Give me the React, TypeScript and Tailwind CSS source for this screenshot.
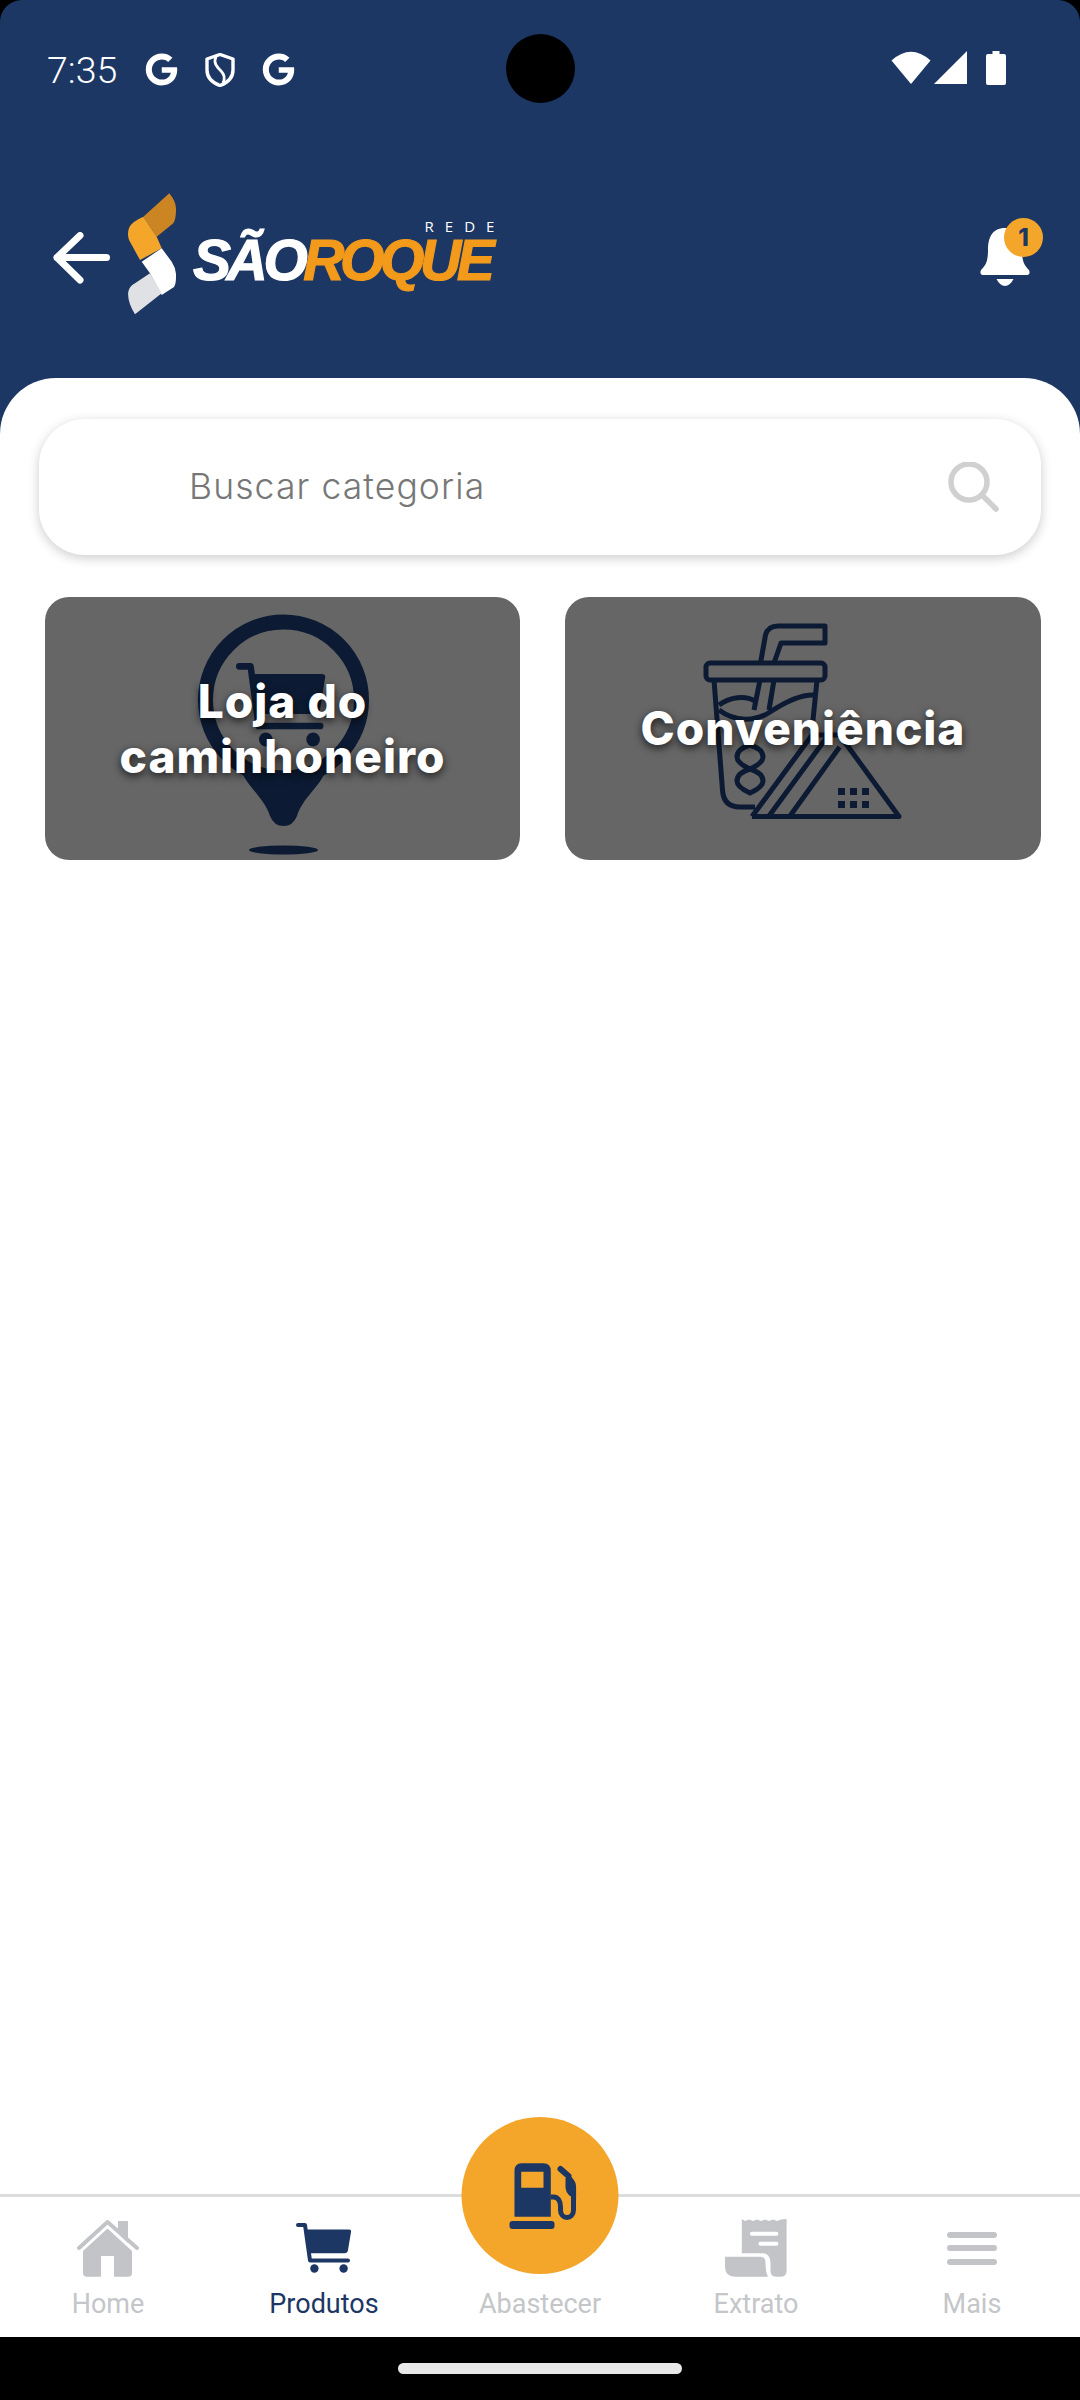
import { FaGoogle } from "react-icons/fa";

const NAVY = "#1c3764";

// Shopping cart used in the tab bar and inside the map pin
const CartShape = ({ color }: { color: string }) => (
  <>
    <path d="M2 2 H9 L14 37.5 H52" fill="none" stroke={color} strokeWidth="4" strokeLinecap="round" strokeLinejoin="round" />
    <path d="M10.5 6.5 H53 Q55.6 6.5 55 9 L52 27 Q51.5 30.3 48.5 30.3 H14 Z" fill={color} />
    <circle cx="18.4" cy="45.5" r="4.2" fill={color} />
    <circle cx="47.6" cy="45.5" r="4.2" fill={color} />
  </>
);

const StatusBar = () => (
  <div className="flex h-[120px] items-start pl-[47px] pr-[74px] pt-[51px] text-white">
    <span className="font-['Roboto'] text-[37.5px] font-light leading-[36px] w-[98px] mt-[1px]">7:35</span>
    <FaGoogle className="mt-[2px] w-[33px] h-[33px]" />
    <svg viewBox="0 0 30 34" className="ml-[27px] mt-[2px] w-[30px] h-[34px]" fill="none" stroke="white">
      <path d="M15 1.5 L28 6 V17 C28 25 22 30 15 32.5 C8 30 2 25 2 17 V6 Z" strokeWidth="3.4" strokeLinejoin="round" />
      <path d="M11 3.5 C8 10 12 14 16 18 C20 22 20 26 18 30" strokeWidth="2.8" />
    </svg>
    <FaGoogle className="ml-[27px] mt-[2px] w-[33px] h-[33px]" />
    <div className="flex-1" />
    <svg viewBox="0 0 40 33" className="w-[40px] h-[33px]" fill="white">
      <path d="M0.5 9.5 Q20 -8 39.5 9.5 L20 33 Z" />
    </svg>
    <svg viewBox="0 0 33 33" className="ml-[3px] w-[33px] h-[33px]" fill="white">
      <path d="M0 33 L33 0 V33 Z" />
    </svg>
    <svg viewBox="0 0 20 34" className="ml-[19px] w-[20px] h-[34px]" fill="white">
      <path d="M6.5 0 H13.5 V3 H18 Q20 3 20 5 V32 Q20 34 18 34 H2 Q0 34 0 32 V5 Q0 3 2 3 H6.5 Z" />
    </svg>
  </div>
);

const Logo = () => (
  <div className="flex items-start ml-[18px]">
    <svg viewBox="0 0 48 122" className="w-[48px] h-[122px] shrink-0">
      <path d="M41.3 0.3 Q48.5 9 48 17 Q48 26 45.3 30.3 L28.7 43.7 L15.3 23.7 Z" fill="#cb8523" />
      <path d="M15.3 23.7 Q3 29 1 35 Q-1 41 1 47 L12 67 L33.7 55.3 L28.7 43.7 Z" fill="#f4a62a" />
      <path d="M13.7 68.7 L33.7 55.3 L43.7 68.7 Q48.5 76 48 84 Q48 91 46 94 L33.7 102 L22 80.3 Z" fill="#ffffff" />
      <path d="M22 80.3 L33.7 100.3 L7 121.3 Q-1 108 0.3 98.7 Q1.5 93 7 90.3 Z" fill="#e0e1e4" />
    </svg>
    <div className="relative ml-[17px] mt-[43px] font-['Liberation_Sans'] text-[57px] font-bold italic leading-[48px] tracking-[-4.4px] whitespace-nowrap [-webkit-text-stroke:1.2px_currentColor]">
      <span className="text-white">SÃO</span>
      <span className="text-[#f39a1b]">ROQUE</span>
      <span className="absolute right-[-15px] top-[-18px] font-['Open_Sans'] text-[15px] font-normal not-italic leading-[16px] tracking-[11px] text-white [-webkit-text-stroke:0]">
        REDE
      </span>
    </div>
  </div>
);

const Header = () => (
  <div className="flex h-[258px] items-start pt-[73px] pl-[53px] pr-[37px]">
    <svg viewBox="0 0 57 52" className="mt-[39px] w-[57px] h-[52px] shrink-0" fill="none" stroke="white" strokeWidth="7" strokeLinecap="round" strokeLinejoin="round">
      <path d="M4 25.5 H53.5 M27 3.5 L4 25.5 L27 48" />
    </svg>
    <Logo />
    <div className="flex-1" />
    <div className="relative mt-[35px] w-[50px] h-[58px] mr-[13px]">
      <svg viewBox="0 0 50 58" className="w-[50px] h-[58px]" fill="white">
        <path d="M25 0 C12 0 8 10 8 22 C8 33 6 37 1 42 Q-1 47 4 47 H46 Q51 47 49 42 C44 37 42 33 42 22 C42 10 38 0 25 0 Z" />
        <path d="M16.5 51 H33.5 Q30 58 25 58 Q20 58 16.5 51 Z" />
      </svg>
      <span className="absolute left-[24px] top-[-10px] flex w-[39px] h-[39px] items-center justify-center rounded-full bg-[#f4a62a] font-['Inter'] text-[24px] font-extrabold text-[#1c3764]">
        1
      </span>
    </div>
  </div>
);

const SearchBox = () => (
  <div className="mx-[39px] flex h-[136px] items-center rounded-[46px] bg-white pl-[150px] pr-[42px] shadow-[0_3px_12px_rgba(0,0,0,0.2)]">
    <span className="flex-1 font-['Inter'] text-[35.5px] font-light tracking-[1.1px] text-[#777777]">Buscar categoria</span>
    <svg viewBox="0 0 51 50" className="w-[51px] h-[50px]" fill="none" stroke="#d0d0d0" strokeWidth="5.5" strokeLinecap="round">
      <circle cx="21" cy="20" r="18" />
      <path d="M34 33 L48 47" />
    </svg>
  </div>
);

const PinIcon = () => (
  <svg viewBox="0 0 475 263" className="absolute inset-0 w-full h-full">
    <circle cx="238.5" cy="103" r="78" fill="none" stroke="#0c1b33" strokeWidth="15" />
    <path d="M190 158 Q238 190 287 158 L281 173 C275 190 258 200 252 219 Q248 229 238.5 229 Q229 229 225 219 C219 200 202 190 196 173 Z" fill="#0c1b33" />
    <ellipse cx="238.5" cy="253" rx="34.5" ry="4.5" fill="#0c1b33" />
    <g transform="translate(191 66) scale(1.62 1.68)">
      <CartShape color="#0c1b33" />
    </g>
  </svg>
);

const CupIcon = () => (
  <svg viewBox="0 0 476 263" className="absolute inset-0 w-full h-full" fill="none" stroke="#0c1b33" strokeWidth="5" strokeLinejoin="round">
    <path d="M195.5 66 L200.5 38 Q203 29 213 29 H260 V46 H216 L209 66" />
    <rect x="141" y="66" width="119" height="17" rx="4" />
    <path d="M149 83 L157.5 193 Q158.5 210 175 210 H190" />
    <path d="M252 83 L247 133" />
    <path d="M195 83 L189 113 M209 83 L204 113" />
    <path d="M154 113 C170 125 190 125 205 115 C220 105 235 97 250 98 M154 108 C165 100 180 98 190 104" />
    <path d="M185 148 Q198 152 198 160 Q198 166 185 172 Q172 166 172 160 Q172 152 185 148 Z" />
    <path d="M185 172 Q198 176 198 184 Q198 190 185 196 Q172 190 172 184 Q172 176 185 172 Z" />
    <path d="M187 219.5 H334 L274.6 138 M187 219.5 L247 138 H276 M204 219 L262 140 M225 219 L274.6 150" />
    <g fill="#0c1b33" stroke="none">
      <rect x="273" y="191" width="7" height="7" />
      <rect x="285" y="191" width="7" height="7" />
      <rect x="297" y="191" width="7" height="7" />
      <rect x="273" y="204" width="7" height="7" />
      <rect x="285" y="204" width="7" height="7" />
      <rect x="297" y="204" width="7" height="7" />
    </g>
  </svg>
);

const CategoryCard = ({ label, icon }: { label: string; icon: React.ReactNode }) => (
  <div className="relative flex h-[263px] items-center justify-center rounded-[24px] bg-[#666666]">
    {icon}
    <span className="relative px-[30px] text-center font-['Inter'] text-[46px] font-extrabold leading-[55px] tracking-[1px] text-white [text-shadow:0_3px_8px_rgba(0,0,0,0.75)]">
      {label}
    </span>
  </div>
);

const HomeIcon = () => (
  <svg viewBox="0 0 62 58" className="w-[62px] h-[58px]" fill="#c2c4c7">
    <path d="M41 2 H51 V24 L41 14 Z" />
    <path d="M30.5 9.5 L55 32 V54 Q55 57.7 51 57.7 H37 V37 H24 V57.7 H10 Q6 57.7 6 54 V32 Z" />
    <path d="M2 29 L30.5 3 L60 29" fill="none" stroke="#c2c4c7" strokeWidth="4" strokeLinecap="round" strokeLinejoin="round" />
  </svg>
);

const ReceiptIcon = () => (
  <svg viewBox="0 0 62 58" className="w-[62px] h-[58px]" fill="#c2c4c7">
    <path fillRule="evenodd" d="M16.8 0 L20 2 L24 0.5 L28 2 L32 0.5 L36 2 L40 0.5 L44 2 L48 0.5 L52 2 L56 0.5 L61.6 0 V52 Q61.6 57.7 56 57.7 H51 Q45.5 57.7 45.5 52 V44 Q45 34.3 38 34.3 H16.8 Z M27 12.7 Q24.8 12.7 24.8 14.7 Q24.8 16.7 27 16.7 H51.4 Q53.4 16.7 53.4 14.7 Q53.4 12.7 51.4 12.7 Z M35.4 22.7 Q33.4 22.7 33.4 24.7 Q33.4 26.7 35.4 26.7 H51.4 Q53.4 26.7 53.4 24.7 Q53.4 22.7 51.4 22.7 Z" />
    <path d="M0 37.7 H36 Q40.5 38 40.5 44 Q40.5 53 43 57.7 H10 Q0 57.7 0 48 Z" />
  </svg>
);

const MenuIcon = () => (
  <div className="flex w-[50px] flex-col gap-[7.5px]">
    <div className="h-[6px] rounded-full bg-[#c2c4c7]" />
    <div className="h-[6px] rounded-full bg-[#c2c4c7]" />
    <div className="h-[6px] rounded-full bg-[#c2c4c7]" />
  </div>
);

const PumpIcon = () => (
  <svg viewBox="0 0 70 70" className="w-[70px] h-[70px]" fill={NAVY}>
    <path fillRule="evenodd" d="M13 3.3 H35 Q42.3 3.3 42.3 11 V56.7 H6 V11 Q6 3.3 13 3.3 Z M12.7 11.7 V27.7 H35 V11.7 Z" />
    <rect x="1" y="61" width="45" height="8" rx="3" />
    <path d="M42 37 H45 C50 37 52 42 52 47 V50 C52 60 65 60 65 50 V26" fill="none" stroke={NAVY} strokeWidth="5" />
    <path d="M52 9 L60 16" fill="none" stroke={NAVY} strokeWidth="6" strokeLinecap="round" />
    <path d="M57 18 L62 16 Q68 22 67.6 27 V39 Q58 36 57 28 Z" />
  </svg>
);

const TabItem = ({ label, icon, active }: { label: string; icon?: React.ReactNode; active?: boolean }) => (
  <div className="relative flex flex-col items-center pt-[22px]">
    <div className="flex h-[58px] items-center justify-center">{icon}</div>
    <span className={`mt-[12px] font-['Roboto'] text-[27px] leading-[30px] ${active ? "text-[#1c3764]" : "text-[#c4c6c9]"}`}>
      {label}
    </span>
  </div>
);

const BottomNav = () => (
  <div className="grid h-[143px] grid-cols-5 border-t-[3px] border-[#dcdcdc] bg-white">
    <TabItem label="Home" icon={<HomeIcon />} />
    <TabItem
      label="Produtos"
      active
      icon={
        <svg viewBox="0 0 56 50" className="w-[56px] h-[50px]">
          <CartShape color={NAVY} />
        </svg>
      }
    />
    <div className="relative">
      <div className="absolute left-1/2 top-[-80px] flex w-[157px] h-[157px] -translate-x-1/2 items-center justify-center rounded-full bg-[#f4a62a]">
        <div className="ml-[6px] mt-[-1px]">
          <PumpIcon />
        </div>
      </div>
      <TabItem label="Abastecer" />
    </div>
    <TabItem label="Extrato" icon={<ReceiptIcon />} />
    <TabItem label="Mais" icon={<MenuIcon />} />
  </div>
);

export default function App() {
  return (
    <div className="relative flex h-[2400px] w-[1080px] flex-col overflow-hidden bg-black">
      <div className="flex flex-1 flex-col rounded-t-[22px] bg-[#1c3764]">
        <StatusBar />
        <Header />
        <div className="flex-1 rounded-t-[56px] bg-white pt-[41px]">
          <SearchBox />
          <div className="mt-[42px] grid grid-cols-[475px_476px] gap-[45px] pl-[45px]">
            <CategoryCard label="Loja do caminhoneiro" icon={<PinIcon />} />
            <CategoryCard label="Conveniência" icon={<CupIcon />} />
          </div>
        </div>
      </div>
      <BottomNav />
      <div className="flex h-[63px] justify-center pt-[26px]">
        <div className="h-[11px] w-[284px] rounded-full bg-[#e8e8e8]" />
      </div>
      {/* camera cutout */}
      <div className="absolute left-[505.5px] top-[34px] h-[69px] w-[69px] rounded-full bg-black" />
    </div>
  );
}
